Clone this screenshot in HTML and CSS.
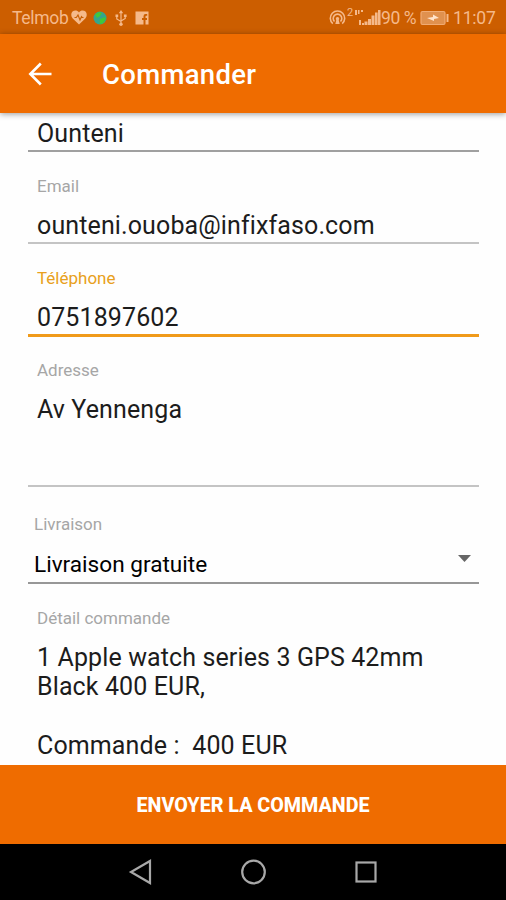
FILE: index.html
```html
<!DOCTYPE html>
<html lang="fr">
<head>
    <meta charset="UTF-8">
    <meta name="viewport" content="width=device-width, initial-scale=1.0">
    <title>Commander</title>
    <link rel="stylesheet" href="styles.css">
</head>
<body>
    <!-- Barre d'état -->
    <div class="status-bar">
        <div class="status-left">
            <span class="carrier">Telmob</span>
            <svg class="icon-heart" width="16" height="15" viewBox="0 0 16 15">
                <path fill="#f5b98a" d="M8 14.6 1.7 8.4C-.2 6.3-.1 3.2 1.5 1.6 3.3-.1 6.3.1 8 2.4 9.7.1 12.7-.1 14.5 1.6 16.1 3.2 16.2 6.3 14.3 8.4z"/>
                <path fill="none" stroke="#c85f05" stroke-width="1.1" d="M3.5 7.5h1.8L7 5l2 5 1.5-3.500.8 1h1.200"/>
            </svg>
            <svg class="icon-globe" width="14" height="14" viewBox="0 0 14 14">
                <circle cx="7" cy="7" r="6.500" fill="#35a58c"/>
                <path fill="#3fc83a" d="M2 3.500 6 1l3 1-2 3-3 2zM7 8l5-2 .8 2-3 4.500L6.500 13z"/>
            </svg>
            <svg class="icon-usb" width="12" height="16" viewBox="0 0 12 16">
                <g fill="none" stroke="#f5b98a" stroke-width="1.200">
                    <path d="M6 2v12M1.800 6v3L6 11.500M10.200 6v2.500L6 11"/>
                </g>
                <path fill="#f5b98a" d="M6 0 8.200 3.300H3.800zM.5 4.500h2.700v2.500H.5zM8.900 4.500h2.700v2.500H8.900z"/>
                <circle cx="6" cy="14.200" r="1.700" fill="#f5b98a"/>
            </svg>
            <svg class="icon-app" width="14" height="14" viewBox="0 0 14 14">
                <path fill="#f5b98a" fill-rule="evenodd" d="M.5.5h13v13h-3V9H12V7h-1.500V5.500q0-.8.800-.8H12.200V3H10.500q-2 0-2 2.200V7H7v2h1.500v4.500H.5z"/>
            </svg>
        </div>
        <div class="status-right">
            <svg class="icon-hotspot" width="17" height="15" viewBox="0 0 17 15">
                <g fill="none" stroke="#f5b98a" stroke-width="1.600">
                    <path d="M3.800 13.600A7.200 7.200 0 1 1 13.200 13.600"/>
                    <path d="M5.500 11.500A4.300 4.300 0 1 1 11.500 11.500"/>
                </g>
                <path fill="#f5b98a" d="M8.500 7a1.700 1.700 0 0 1 1.200 2.900l1 4.100H6.300l1-4.100A1.700 1.700 0 0 1 8.500 7z"/>
            </svg>
            <span class="sim">2</span>
            <svg class="icon-signal" width="27" height="17" viewBox="0 0 27 17">
                <path fill="#f5b98a" d="M1 1h2v5H1zM4 1h1.500v4H4zM7 1h2v2H7zM5 11h2v5H5zM8 14h2v2H8zM10.500 12.500h3V16h-3zM14 10h3v6h-3zM17.500 6.500h3V16h-3zM21 3.500h2.600V16H21zM24 1h2.500v15H24z"/>
            </svg>
            <span class="level">90 %</span>
            <svg class="icon-battery" width="29" height="16" viewBox="0 0 29 16">
                <rect x="1" y="1.500" width="24" height="13" rx="1.500" fill="#e0914f" stroke="#f0ab74" stroke-width="1.200"/>
                <path fill="#ffe4cc" d="M7 8l6-1V4.500L19 8l-5 1v2z"/>
                <path fill="#f5b98a" d="M26.500 4h2v8h-2z"/>
            </svg>
            <span class="clock">11:07</span>
        </div>
    </div>

    <header class="app-bar">
        <svg class="back" width="24" height="24" viewBox="0 0 24 24">
            <path fill="none" stroke="#fff" stroke-width="2.600" d="M23.500 12H2.500M12.800 1.500 2.300 12l10.500 10.500"/>
        </svg>
        <h1>Commander</h1>
    </header>

    <!-- Formulaire -->
    <main class="form">
        <div class="field first">
            <div class="value">Ounteni</div>
        </div>
        <div class="field">
            <div class="label">Email</div>
            <div class="value">ounteni.ouoba@infixfaso.com</div>
        </div>
        <div class="field focused">
            <div class="label">Téléphone</div>
            <div class="value">0751897602</div>
        </div>
        <div class="field address">
            <div class="label">Adresse</div>
            <div class="value">Av Yennenga</div>
        </div>
        <div class="field delivery">
            <div class="label">Livraison</div>
            <div class="value">
                <span>Livraison gratuite</span>
                <svg width="13" height="7" viewBox="0 0 13 7"><path fill="#666" d="M0 0h13L6.500 7z"/></svg>
            </div>
        </div>
        <div class="field detail">
            <div class="label">Détail commande</div>
            <div class="value">1 Apple watch series 3 GPS 42mm
Black 400 EUR,

Commande :  400 EUR</div>
        </div>
    </main>

    <button class="submit">ENVOYER LA COMMANDE</button>

    <!-- Navigation Android -->
    <nav class="nav-bar">
        <svg width="26" height="26" viewBox="0 0 26 26"><path d="M23 2v22L4 13z"/></svg>
        <svg width="26" height="26" viewBox="0 0 26 26"><circle cx="13.500" cy="13" r="11.300"/></svg>
        <svg width="26" height="26" viewBox="0 0 26 26"><rect x="3.500" y="3.500" width="19" height="19"/></svg>
    </nav>
</body>
</html>
```

FILE: styles.css
```css
* {
    box-sizing: border-box;
}

body {
    margin: 0;
    height: 900px;
    display: flex;
    flex-direction: column;
    overflow: hidden;
    font-family: Roboto, sans-serif;
    background-color: #fefefe;
    color: #1c1c1c;
}

.status-bar {
    height: 34px;
    flex: none;
    display: flex;
    justify-content: space-between;
    align-items: center;
    padding: 1px 11px 0 12px;
    background-color: #cc5e00;
    color: #f5b98a;
    font-size: 17.5px;
}

.status-left,
.status-right {
    display: flex;
    align-items: center;
}

.carrier {
    width: 59px;
    letter-spacing: -0.3px;
}

.icon-globe {
    margin-left: 6px;
}

.icon-usb {
    margin-left: 8px;
}

.icon-app {
    margin-left: 8px;
}

.sim {
    width: 7px;
    font-size: 11px;
    line-height: 10px;
    margin-bottom: 9px;
}

.level {
    width: 39px;
    white-space: nowrap;
    letter-spacing: -0.4px;
}

.clock {
    width: 42px;
    margin-left: 4px;
    letter-spacing: -0.2px;
}

.icon-hotspot {
    margin-right: 1px;
}

.app-bar {
    height: 79px;
    flex: none;
    display: flex;
    align-items: center;
    padding-left: 28px;
    background-color: #ef6c00;
    box-shadow: 0 1px 6px rgba(0, 0, 0, 0.4);
    z-index: 1;
}

.app-bar h1 {
    margin: 2px 0 0 50px;
    color: #fff;
    font-size: 27.5px;
    font-weight: 500;
    letter-spacing: 0.3px;
}

.form {
    height: 652px;
    flex: none;
    overflow: hidden;
    padding: 0 27px 0 28px;
}

.field {
    padding-top: 24px;
    border-bottom: 2px solid #c4c4c4;
}

.label {
    padding-left: 9px;
    height: 20px;
    margin-bottom: 15px;
    line-height: 20px;
    font-size: 17px;
    color: #a6a6a6;
}

.value {
    padding-left: 9px;
    height: 31px;
    line-height: 30px;
    font-size: 25px;
    letter-spacing: 0.12px;
}

.first {
    padding-top: 6px;
    border-color: #a0a0a0;
}

.focused {
    border-bottom: 3px solid #f09a1a;
}

.focused .label {
    color: #e8a020;
}

.address {
    padding-top: 23px;
}

.address .label {
    margin-bottom: 15px;
}

.address .value {
    height: 90px;
}

.delivery {
    padding-top: 27px;
    border-color: #979797;
}

.delivery .label {
    padding-left: 6px;
    margin-bottom: 16px;
}

.delivery .value {
    display: flex;
    justify-content: space-between;
    padding: 0 8px 0 6px;
    height: 32px;
    line-height: 29px;
    font-size: 22.6px;
    letter-spacing: 0;
    color: #000;
}

.delivery svg {
    margin-top: 5px;
}

.detail {
    border: none;
}

.detail .label {
    margin-bottom: 15px;
}

.detail .value {
    height: auto;
    line-height: 29.4px;
    white-space: pre;
}

.submit {
    height: 79px;
    flex: none;
    border: none;
    padding: 2px 0 0;
    background-color: #ef6c00;
    color: #fff;
    font-family: inherit;
    font-size: 19.7px;
    font-weight: 800;
}

.nav-bar {
    height: 56px;
    flex: none;
    display: flex;
    align-items: center;
    justify-content: center;
    gap: 87px;
    background-color: #000;
}

.nav-bar svg {
    fill: none;
    stroke: #a8a8a8;
    stroke-width: 2.2;
}
```
